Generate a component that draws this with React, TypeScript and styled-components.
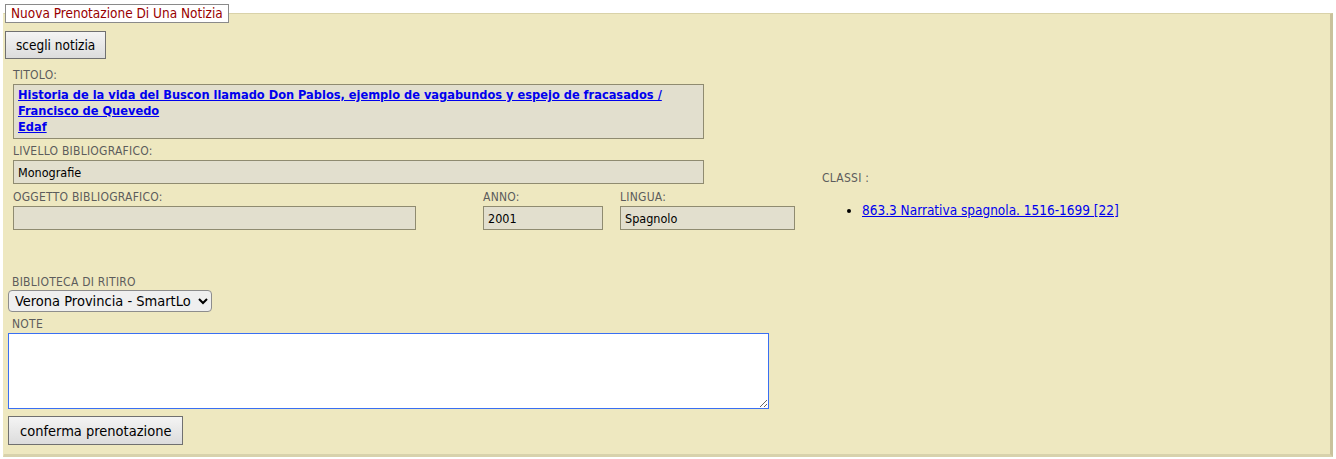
import React from 'react'
import styled, { createGlobalStyle } from 'styled-components'

const GlobalStyle = createGlobalStyle`
  html, body {
    margin: 0;
    padding: 0;
    background: #ffffff;
  }
  body {
    font-family: "DejaVu Sans Condensed", "DejaVu Sans", sans-serif;
    font-stretch: semi-condensed;
    font-size: 12px;
    color: #000;
  }
`

const Panel = styled.fieldset`
  margin: 4px 3px 0 3px;
  padding: 0 0 8px 0;
  min-width: 0;
  background: #eee8c0;
  border: 0;
  border-top: 1px solid #d9d2a9;
  border-right: 3px solid #c9c29c;
  border-bottom: 3px solid #d8d2ac;
  border-left: 1px solid #eee8c0;
  height: 453px;
  box-sizing: border-box;
`

const Legend = styled.legend`
  margin-left: 1px;
  padding: 1px 5px 2px 5px;
  background: #ffffff;
  border: 1px solid #8a8a8a;
  color: #990000;
  font-size: 13.5px;
  line-height: 14px;
`

const Body = styled.div`
  padding: 8px 0 0 1px;
  display: flex;
  flex-direction: column;
`

const Button = styled.button<{ $big?: boolean }>`
  align-self: flex-start;
  height: ${(p) => (p.$big ? '29px' : '28px')};
  padding: 0 ${(p) => (p.$big ? '11px' : '10px')};
  font-family: inherit;
  font-stretch: inherit;
  font-size: ${(p) => (p.$big ? '14.5px' : '13.5px')};
  color: #000;
  background: linear-gradient(#f4f4f4, #dcdcdc);
  border: 1px solid #707070;
  border-radius: 0;
`

const Main = styled.div`
  display: flex;
  gap: 26px;
  margin-top: 10px;
  padding-left: 8px;
`

const LeftCol = styled.div`
  display: flex;
  flex-direction: column;
  width: 783px;
`

const Label = styled.div<{ $indent?: number }>`
  padding-left: ${(p) => p.$indent ?? 0}px;
  font-size: 12px;
  letter-spacing: 0.25px;
  line-height: 13px;
  color: #5c5c5c;
  text-transform: uppercase;
  white-space: nowrap;
`

const Field = styled.div<{ $w: number; $h?: number }>`
  width: ${(p) => p.$w}px;
  height: ${(p) => p.$h ?? 24}px;
  box-sizing: border-box;
  margin-top: 2px;
  padding: 2px 4px 0 4px;
  background: #e2dfce;
  border: 1px solid #8f8b70;
  font-size: 12.5px;
  line-height: 16px;
  display: flex;
  flex-direction: column;
  justify-content: ${(p) => (p.$h ? 'flex-start' : 'center')};
`

const TitleLink = styled.a`
  color: #0000ee;
  font-weight: bold;
  text-decoration: underline;
  font-size: 12.7px;
  line-height: 16px;
  white-space: nowrap;
`

const Group = styled.div<{ $top?: number; $left?: number }>`
  margin-top: ${(p) => p.$top ?? 0}px;
  margin-left: ${(p) => p.$left ?? 0}px;
  display: flex;
  flex-direction: column;
`

const Row = styled.div`
  display: flex;
  margin-top: 7px;
`

const RightCol = styled.div`
  padding-top: 103px;
`

const ClassList = styled.ul`
  margin: 17px 0 0 0;
  padding-left: 40px;
  font-size: 13.5px;
  line-height: 16px;
`

const ClassLink = styled.a`
  color: #0000ee;
  text-decoration: underline;
`

const Lower = styled.div`
  padding-left: 3px;
  margin-top: 46px;
  display: flex;
  flex-direction: column;
`

const Select = styled.select`
  align-self: flex-start;
  width: 204px;
  height: 22px;
  margin-top: 1px;
  font-family: inherit;
  font-stretch: inherit;
  font-size: 14.5px;
  color: #000;
  background: #efefef;
  border: 1px solid #8d8d8d;
  border-radius: 4px;
  padding: 0 2px;
`

const Notes = styled.textarea`
  width: 761px;
  height: 76px;
  box-sizing: border-box;
  margin-top: 2px;
  border: 1px solid #3a6ff2;
  outline: none;
  background: #fff;
  resize: both;
`

const App: React.FC = () => (
  <>
    <GlobalStyle />
    <Panel>
      <Legend>Nuova Prenotazione Di Una Notizia</Legend>
      <Body>
        <Button type="button">scegli notizia</Button>
        <Main>
          <LeftCol>
            <Group>
              <Label>Titolo:</Label>
              <Field $w={691} $h={55}>
                <TitleLink href="#">
                  Historia de la vida del Buscon llamado Don Pablos, ejemplo de vagabundos y espejo de fracasados /
                </TitleLink>
                <TitleLink href="#">Francisco de Quevedo</TitleLink>
                <TitleLink href="#">Edaf</TitleLink>
              </Field>
            </Group>
            <Group $top={6}>
              <Label>Livello bibliografico:</Label>
              <Field $w={691}>Monografie</Field>
            </Group>
            <Row>
              <Group>
                <Label>Oggetto bibliografico:</Label>
                <Field $w={403} />
              </Group>
              <Group $left={67}>
                <Label>Anno:</Label>
                <Field $w={120}>2001</Field>
              </Group>
              <Group $left={17}>
                <Label>Lingua:</Label>
                <Field $w={175}>Spagnolo</Field>
              </Group>
            </Row>
          </LeftCol>
          <RightCol>
            <Label>Classi :</Label>
            <ClassList>
              <li>
                <ClassLink href="#">863.3 Narrativa spagnola. 1516-1699 [22]</ClassLink>
              </li>
            </ClassList>
          </RightCol>
        </Main>
        <Lower>
          <Label $indent={4}>Biblioteca di ritiro</Label>
          <Select defaultValue="vr">
            <option value="vr">Verona Provincia - SmartLo</option>
          </Select>
          <Group $top={6}>
            <Label $indent={4}>Note</Label>
            <Notes />
          </Group>
          <Group $top={7}>
            <Button type="button" $big>
              conferma prenotazione
            </Button>
          </Group>
        </Lower>
      </Body>
    </Panel>
  </>
)

export default App
